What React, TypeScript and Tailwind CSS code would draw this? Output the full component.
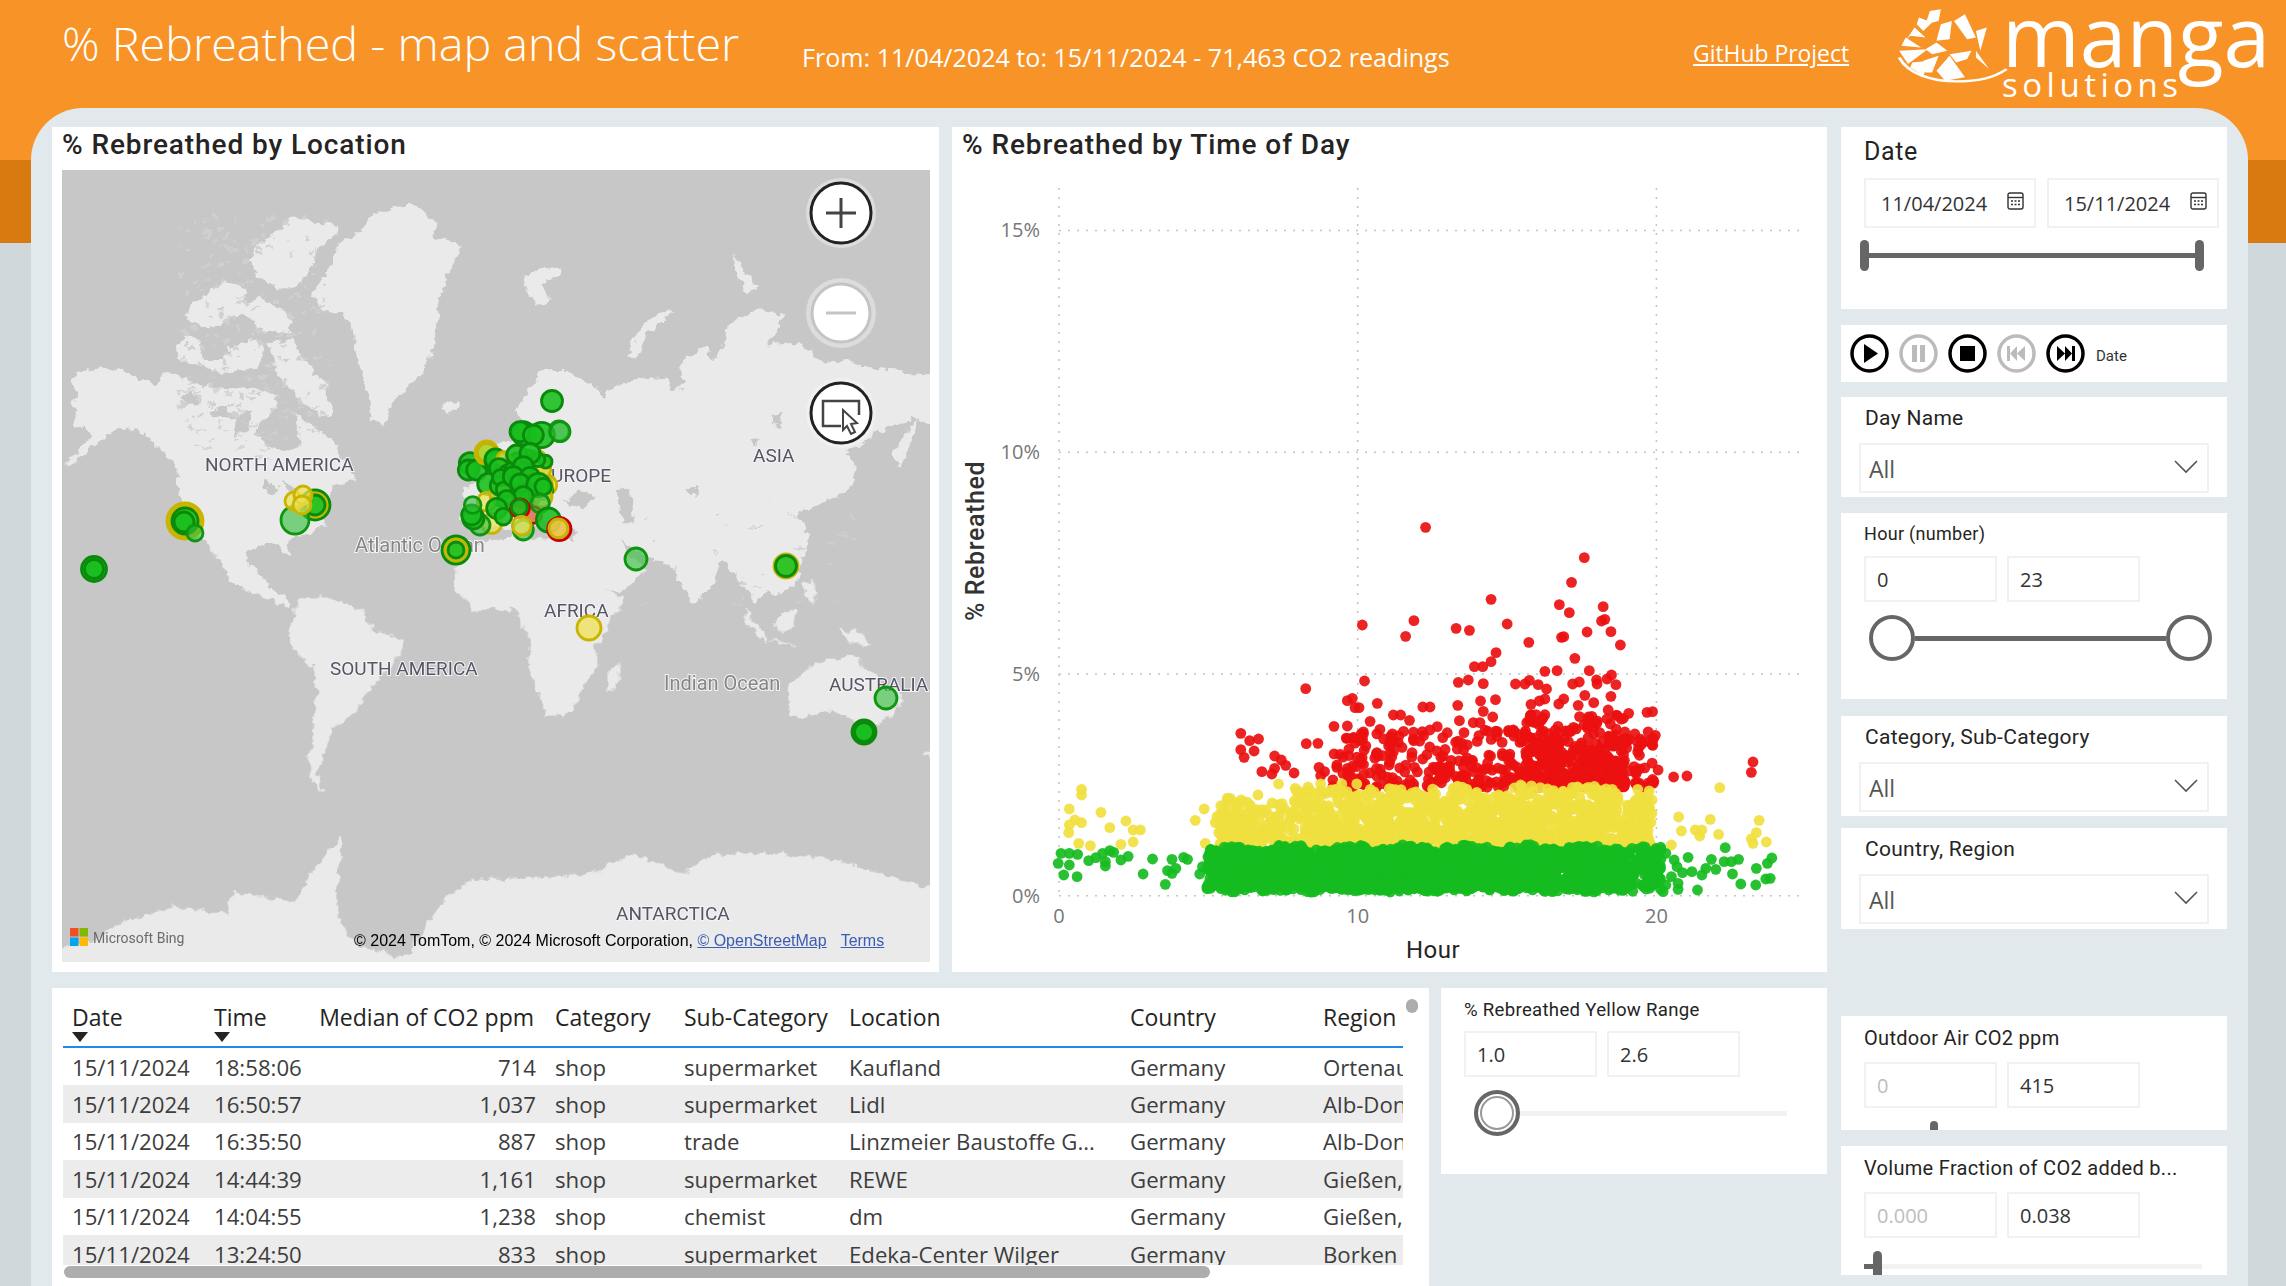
import React from "react";

// seeded random, so the scatter stays the same on every load
const makeRand = (seed: number) => () => {
  seed |= 0;
  seed = (seed + 0x6d2b79f5) | 0;
  let t = Math.imul(seed ^ (seed >>> 15), 1 | seed);
  t = (t + Math.imul(t ^ (t >>> 7), 61 | t)) ^ t;
  return ((t ^ (t >>> 14)) >>> 0) / 4294967296;
};

type Pt = [number, number];

// points read off the reference (crop coordinates), mapped in toChart
const toChart = ([x, y]: Pt): Pt => [x / 1.802 - 2, y / 3 + 330];

const redSparse: Pt[] = [
  [857, 82], [1143, 173], [1120, 247], [975, 298], [1098, 314], [1116, 338], [1177, 320], [1180, 358], [1174, 363], [743, 375],
  [836, 362], [821, 409], [912, 385], [936, 391], [1004, 372], [1148, 396], [1191, 395], [1102, 412], [1106, 410], [1043, 427],
  [1208, 435], [984, 458], [1126, 475], [975, 485], [945, 500], [960, 500], [1072, 514], [1094, 512], [1152, 512], [1192, 525],
  [1184, 537], [1165, 540], [1166, 552], [1134, 546], [1122, 552], [1200, 554], [916, 547], [934, 540], [961, 551], [1019, 552],
  [1036, 552], [1044, 541], [1060, 554], [1075, 567], [747, 543], [641, 566], [1144, 586], [1191, 589], [725, 595], [716, 602],
  [770, 610], [956, 603], [983, 599], [1047, 613], [1062, 603], [1072, 597], [1106, 597], [1097, 612], [1132, 616], [1160, 608],
  [915, 616], [852, 621], [865, 621], [730, 623], [737, 623], [961, 634], [1186, 630], [1223, 640], [1202, 646], [1256, 637],
  [1266, 635], [799, 645], [812, 645], [828, 661], [978, 651], [757, 664], [918, 662], [692, 679], [716, 678], [878, 680],
  [943, 668], [955, 668], [524, 700], [556, 717], [540, 722], [642, 731], [663, 730], [716, 715], [745, 702], [738, 722],
  [524, 749], [548, 753], [530, 772], [585, 768], [597, 780], [605, 796], [562, 815], [585, 805], [580, 822], [620, 819],
  [665, 802], [675, 815], [668, 827], [697, 802], [690, 840], [708, 820], [716, 805], [1304, 831], [1328, 828], [1276, 810],
  [1271, 706], [1447, 786], [1444, 817], [1234, 702], [1247, 724],
];

const yellowSparse: Pt[] = [
  [237, 868], [237, 885], [215, 927], [272, 937], [225, 960], [237, 968], [215, 975], [214, 998], [317, 963], [288, 983],
  [330, 990], [343, 990], [232, 1030], [253, 1037], [308, 1033], [330, 1026], [442, 961], [458, 927], [487, 941], [460, 1030],
  [478, 968], [1387, 863], [1313, 951], [1370, 958], [1458, 961], [1318, 993], [1343, 990], [1355, 990], [1351, 1008], [1385, 1003],
  [1453, 998], [1444, 1017], [1447, 1030], [1471, 1026], [1300, 1035], [1265, 900], [1265, 940], [592, 852], [622, 865], [668, 852],
  [706, 852], [733, 852], [505, 895], [525, 900], [555, 885],
];

const greenSparse: Pt[] = [
  [200, 1060], [215, 1060], [230, 1063], [195, 1090], [215, 1095], [205, 1125], [229, 1130], [250, 1082], [263, 1073], [275, 1060],
  [288, 1052], [295, 1057], [280, 1085], [280, 1098], [308, 1080], [321, 1069], [365, 1077], [348, 1122], [388, 1153], [392, 1112],
  [400, 1120], [407, 1105], [400, 1078], [421, 1072], [428, 1078], [455, 1100], [450, 1122], [1330, 1072], [1372, 1078], [1397, 1043],
  [1395, 1085], [1408, 1085], [1421, 1078], [1380, 1108], [1362, 1105], [1355, 1125], [1410, 1122], [1425, 1152], [1452, 1155], [1347, 1170],
  [1453, 1105], [1473, 1090], [1481, 1074], [1470, 1137], [1478, 1135], [1305, 1080], [1310, 1100], [1320, 1118], [1290, 1060], [1300, 1130],
  [1290, 1155], [1312, 1150], [1285, 1175], [1312, 1168], [1337, 1115],
];

const buildScatter = () => {
  const r = makeRand(42);
  const red: Pt[] = [...redSparse];
  const yellow: Pt[] = [...yellowSparse];
  const green: Pt[] = [...greenSparse];
  for (let i = 0; i < 620; i++) {
    const busy = r() < 0.38;
    const x = busy ? 1030 + r() * 190 : 690 + r() * 580;
    const y = 862 - Math.pow(r(), 1.5) * (busy ? 220 : 175);
    red.push([x, y]);
  }
  for (let i = 0; i < 1500; i++) {
    const x = 480 + r() * 785;
    if (x < 640 && r() < 0.5) continue;
    if (x > 1180 && r() < 0.3) continue;
    const top = x < 620 ? 885 + r() * 30 : 850 + Math.abs(Math.sin(x / 41)) * 14;
    yellow.push([x, top + Math.pow(r(), 0.72) * (1045 - top)]);
  }
  for (let i = 0; i < 2300; i++) {
    const x = 462 + r() * 820;
    if (x > 1215 && r() < 0.45) continue;
    if (x < 520 && r() < 0.35) continue;
    const top = 1042 + 7 * Math.sin(x / 17) + 5 * Math.sin(x / 6);
    const bottom = 1178 - 8 * Math.abs(Math.sin(x / 23));
    green.push([x, top + r() * (bottom - top)]);
  }
  return { red, yellow, green };
};

const scatter = buildScatter();

const ScatterChart = () => {
  const xAt = (h: number) => 107 + 29.87 * h;
  const yAt = (p: number) => 725.7 - 44.35 * p;
  const group = (pts: Pt[], fill: string) => (
    <g fill={fill} fillOpacity={0.92}>
      {pts.map((p, i) => {
        const [x, y] = toChart(p);
        return <circle key={i} cx={x} cy={y} r={5.4} />;
      })}
    </g>
  );
  return (
    <svg width={875} height={802} viewBox="0 0 875 802" className="block">
      <g stroke="#c4c4c4" strokeWidth={1.5} strokeDasharray="2 7">
        {[0, 5, 10, 15].map((p) => (
          <line key={p} x1={107} x2={851} y1={yAt(p)} y2={yAt(p)} />
        ))}
        {[0, 10, 20].map((h) => (
          <line key={h} x1={xAt(h)} x2={xAt(h)} y1={18} y2={726} />
        ))}
      </g>
      {group(scatter.red, "#ec1010")}
      {group(scatter.yellow, "#f0e03f")}
      {group(scatter.green, "#16bc20")}
      <g fill="#777" fontSize={20} fontFamily="'Open Sans',sans-serif">
        {[0, 5, 10, 15].map((p) => (
          <text key={p} x={88} y={yAt(p) + 7} textAnchor="end">
            {p}%
          </text>
        ))}
        {[0, 10, 20].map((h) => (
          <text key={h} x={xAt(h)} y={753} textAnchor="middle">
            {h}
          </text>
        ))}
      </g>
      <text x={481} y={788} textAnchor="middle" fontSize={24} fontWeight={400} letterSpacing={0.5} fill="#252423" fontFamily="Roboto,sans-serif">
        Hour
      </text>
      <text
        transform="translate(32 371) rotate(-90)"
        textAnchor="middle"
        fontSize={25}
        fontWeight={500}
        letterSpacing={0.6}
        fill="#333"
        fontFamily="Roboto,sans-serif"
      >
        % Rebreathed
      </text>
    </svg>
  );
};

// land shapes, one group per crop they were traced from
const landNorth = [
  "750,370 800,300 830,215 890,190 940,130 1050,100 1130,160 1110,200 1205,225 1150,320 1130,420 1120,520 1090,590 1050,640 990,690 970,765 930,750 915,650 890,580 870,470 840,430 780,420",
  "600,215 690,145 820,165 830,190 770,240 720,340 660,360 590,320 560,270",
  "365,430 400,400 450,360 500,330 550,360 540,400 600,380 690,450 680,490 600,480 540,430 450,480 380,445",
  "345,530 370,495 410,510 430,570 480,570 500,540 560,510 610,520 590,590 500,610 430,590 350,570",
  "620,520 690,510 740,590 790,640 810,730 780,740 700,680 640,600",
  "30,630 70,600 130,590 200,610 270,645 320,605 400,640 480,660 560,650 640,670 650,720 700,720 720,750 770,780 830,830 880,930 810,950 800,990 760,1000 790,1060 730,1100 680,1110 680,1160 640,1120 570,1130 550,1170 590,1210 630,1260 690,1300 680,1320 640,1290 570,1270 510,1230 470,1170 430,1110 400,1100 360,1020 350,950 340,880 290,830 240,790 180,770 130,800 90,830 30,880 5,890 60,830 90,790 60,770 30,760 50,720 25,700 50,680",
  "1140,705 1190,690 1190,715 1150,730",
];

const lakesNorth = [
  "580,790 590,750 650,720 700,720 700,770 720,820 690,840 620,830",
  "350,680 400,670 420,700 370,705",
  "430,720 500,710 520,740 450,745",
  "520,740 570,720 560,780 520,800",
  "600,930 650,950 640,975 600,950",
  "660,930 720,960 700,980 670,960",
];

const landEast = [
  "-60,1050 -40,1000 -50,960 0,930 0,870 30,830 90,810 130,760 110,720 150,650 190,600 260,600 350,650 370,680 380,660 430,640 500,620 560,630 580,670 600,650 610,630 600,590 620,560 680,530 700,570 730,540 740,470 830,410 860,420 910,440 860,520 960,520 1030,580 1100,570 1150,590 1260,600 1420,620 1420,780 1300,745 1240,770 1190,790 1100,850 1130,900 1110,960 1030,1000 950,1030 990,1100 970,1170 950,1240 890,1280 860,1260 830,1300 790,1250 730,1170 690,1260 640,1300 600,1240 570,1180 500,1165 420,1110 450,1160 500,1190 450,1250 390,1270 370,1250 295,1130 280,1100 290,1080 180,1050 130,1090",
  "445,560 480,470 560,420 570,430 500,490 470,570",
  "130,320 190,290 245,295 230,320 180,340 220,390 170,410 140,360",
  "760,250 790,300 840,350 800,370 770,320",
  "1240,850 1280,790 1310,745 1300,800 1260,900",
];

const seasEast = [
  "260,990 300,960 345,980 320,1010 270,1010",
  "410,960 450,955 460,1060 425,1060",
  "800,800 840,800 830,830",
  "880,730 905,730 900,770 880,760",
  "610,960 660,950 650,980",
];

const landSouth = [
  "710,30 740,-50 800,-70 930,-60 960,30 985,95 1015,115 965,260 965,310 945,380 910,465 875,470 860,400 840,310 845,240 835,200 820,150 745,150 725,120 710,80",
  "1010,305 1000,385 985,390 985,340",
  "430,115 490,115 550,160 560,210 620,240 610,290 560,380 530,450 490,510 470,600 460,650 475,695 455,670 445,600 455,480 460,400 455,330 420,270 410,220",
  "1310,380 1360,310 1410,290 1440,290 1450,330 1500,385 1520,420 1480,490 1450,510 1415,470 1395,450 1330,475 1315,470",
  "1550,580 1600,565 1600,600",
  "1230,150 1250,180 1275,240 1270,245 1240,200",
  "1285,180 1325,145 1320,210 1290,215",
  "1400,210 1440,215 1460,260 1430,250",
  "1275,240 1340,255 1290,250",
  "1340,60 1360,70 1360,130 1345,120",
  "-30,1180 40,1150 110,1090 200,1040 300,1060 310,1000 370,1010 420,1030 450,940 490,860 505,830 495,1000 500,1090 540,1160 620,1190 660,1090 690,1020 740,960 900,950 960,940 1030,880 1120,940 1180,880 1300,880 1400,900 1500,950 1620,1010 1620,1300 -30,1300",
];

type Kind = "g" | "l" | "y" | "r" | "o";
type Marker = [number, number, number, Kind];

const markerStyle: Record<Kind, { fill: string; stroke: string }> = {
  g: { fill: "rgba(24,190,30,.88)", stroke: "#0a8a0a" },
  l: { fill: "rgba(50,190,60,.62)", stroke: "#0f960f" },
  y: { fill: "rgba(240,226,80,.72)", stroke: "#c9b400" },
  r: { fill: "rgba(232,84,48,.72)", stroke: "#c80000" },
  o: { fill: "rgba(172,212,50,.92)", stroke: "#c2b100" },
};

const looseMarkers: Marker[] = [
  [123, 351, 18, "y"], [123, 351, 15.5, "y"], [123, 351, 13, "g"], [122, 352, 10, "g"], [133, 363, 8, "l"],
  [253, 335, 15, "g"], [253, 335, 12, "y"], [253, 335, 10, "g"], [233, 350, 14, "l"], [232, 331, 9, "y"], [241, 325, 9, "y"], [240, 335, 9, "y"],
  [394, 380, 14, "g"], [394, 380, 11, "y"], [394, 380, 8, "g"],
  [527, 458, 12, "y"], [497, 261, 10, "l"], [574, 389, 11, "l"], [724, 396, 12, "y"], [724, 396, 10.5, "g"],
  [824, 528, 11, "l"], [802, 562, 12, "g"], [802, 562, 9.5, "g"], [32, 399, 12.5, "g"], [32, 399, 9.5, "g"], [490, 231, 10.5, "g"],
];

const clusterBase: Marker[] = [
  [310, 160, 35, "g"], [300, 155, 30, "g"], [365, 165, 38, "g"], [340, 165, 30, "g"], [420, 155, 30, "l"],
  [150, 250, 32, "g"], [145, 270, 30, "g"], [170, 270, 30, "g"], [215, 245, 28, "g"], [240, 270, 28, "g"], [205, 312, 32, "g"], [240, 310, 26, "g"],
  [200, 218, 35, "y"], [200, 218, 28, "o"],
  [360, 260, 30, "y"], [365, 265, 22, "y"], [200, 365, 28, "y"], [215, 430, 30, "y"], [380, 315, 30, "y"],
  [290, 225, 30, "g"], [330, 220, 30, "g"], [310, 260, 30, "g"], [280, 290, 30, "g"], [330, 290, 28, "g"], [300, 310, 28, "g"],
  [355, 315, 35, "g"], [370, 320, 25, "g"], [310, 350, 30, "g"],
  [340, 405, 25, "r"], [360, 370, 28, "l"], [260, 360, 28, "g"], [230, 385, 30, "g"], [250, 410, 25, "g"],
  [300, 385, 28, "r"], [298, 382, 24, "g"], [180, 435, 30, "l"], [160, 415, 32, "g"], [155, 405, 30, "g"], [158, 375, 25, "l"],
  [310, 450, 30, "l"], [305, 437, 28, "y"], [385, 420, 36, "g"], [418, 447, 35, "r"], [415, 445, 28, "y"],
];

const buildCluster = (): Marker[] => {
  const r = makeRand(7);
  const extra: Marker[] = [];
  for (let i = 0; i < 70; i++) {
    extra.push([225 + r() * 155, 235 + r() * 120, 18 + r() * 14, r() < 0.38 ? "y" : "g"]);
  }
  const out = [...clusterBase.slice(0, 19), ...extra, ...clusterBase.slice(19)];
  return out.map(([x, y, rad, k]) => [358 + x / 3, 210 + y / 3, rad / 3, k]);
};

const markers = [...looseMarkers, ...buildCluster()];

const landSpecks = (() => {
  const r = makeRand(11);
  const out: { x: number; y: number; w: number; h: number }[] = [];
  for (let i = 0; i < 70; i++) {
    out.push({ x: 115 + r() * 140, y: 215 + r() * 75, w: 2 + r() * 7, h: 1.5 });
  }
  for (let i = 0; i < 30; i++) {
    out.push({ x: 560 + r() * 230, y: 330 + r() * 110, w: 2 + r() * 8, h: 1.5 });
  }
  // the arctic islands are broken up in the reference
  for (let i = 0; i < 170; i++) {
    out.push({ x: 115 + r() * 150, y: 45 + r() * 200, w: 1.5 + r() * 6, h: 1.5 + r() * 3.5 });
  }
  return out;
})();

const labels: { x: number; y: number; t: string; sea?: boolean; end?: boolean }[] = [
  { x: 143, y: 301, t: "NORTH AMERICA" },
  { x: 691, y: 292, t: "ASIA" },
  { x: 549, y: 312, t: "EUROPE", end: true },
  { x: 293, y: 382, t: "Atlantic Ocean", sea: true },
  { x: 482, y: 447, t: "AFRICA" },
  { x: 268, y: 505, t: "SOUTH AMERICA" },
  { x: 602, y: 520, t: "Indian Ocean", sea: true },
  { x: 767, y: 521, t: "AUSTRALIA" },
  { x: 554, y: 750, t: "ANTARCTICA" },
];

const WorldMap = () => (
  <div className="relative ml-[10px] h-[792px] w-[868px] overflow-hidden bg-[#c7c7c7]">
    <svg width={868} height={792} viewBox="0 0 868 792" className="block">
      <defs>
        <filter id="rough" filterUnits="userSpaceOnUse" x={-30} y={-30} width={928} height={852}>
          <feTurbulence type="fractalNoise" baseFrequency="0.11" numOctaves={3} seed={4} result="noise" />
          <feDisplacementMap in="SourceGraphic" in2="noise" scale={11} xChannelSelector="R" yChannelSelector="G" />
        </filter>
      </defs>
      <g filter="url(#rough)">
        <g fill="#eaeaea" transform="scale(.3333)">
          {landNorth.map((p) => (
            <polygon key={p} points={p} />
          ))}
        </g>
        <g fill="#c7c7c7" transform="scale(.3333)">
          {lakesNorth.map((p) => (
            <polygon key={p} points={p} />
          ))}
        </g>
        <g fill="#eaeaea" transform="translate(418 0) scale(.3333)">
          {landEast.map((p) => (
            <polygon key={p} points={p} />
          ))}
        </g>
        <g fill="#c7c7c7" transform="translate(418 0) scale(.3333)">
          {seasEast.map((p) => (
            <polygon key={p} points={p} />
          ))}
        </g>
        <g fill="#eaeaea" transform="translate(0 390) scale(.5537 .3333)">
          {landSouth.map((p) => (
            <polygon key={p} points={p} />
          ))}
        </g>
        <g fill="#d0d0d0">
          {landSpecks.map((s, i) => (
            <rect key={i} x={s.x} y={s.y} width={s.w} height={s.h} />
          ))}
        </g>
      </g>
      <g fontFamily="Roboto,sans-serif" stroke="#f4f4f4" strokeWidth={2} style={{ paintOrder: "stroke" }}>
        {labels.map((l) => (
          <text
            key={l.t}
            x={l.x}
            y={l.y}
            fontSize={l.sea ? 20 : 19}
            fill={l.sea ? "#858585" : "#555566"}
            textAnchor={l.end ? "end" : "start"}
          >
            {l.t}
          </text>
        ))}
      </g>
      <g strokeWidth={2.8}>
        {markers.map(([x, y, r, k], i) => (
          <circle key={i} cx={x} cy={y} r={r} fill={markerStyle[k].fill} stroke={markerStyle[k].stroke} />
        ))}
      </g>

      <circle cx={779} cy={43} r={35} fill="#dcdcdc" />
      <circle cx={779} cy={43} r={30} fill="#fff" stroke="#222" strokeWidth={3} />
      <path d="M779 28v30M764 43h30" stroke="#444" strokeWidth={3} />
      <circle cx={779} cy={143} r={35} fill="#dcdcdc" />
      <circle cx={779} cy={143} r={29} fill="#fff" stroke="#c4c4c4" strokeWidth={3} />
      <path d="M764 143h30" stroke="#c4c4c4" strokeWidth={3} />
      <circle cx={779} cy={243} r={35} fill="#f0f0f0" />
      <circle cx={779} cy={243} r={30} fill="#fff" stroke="#222" strokeWidth={3} />
      <path d="M779 256h-18v-25h36v14" fill="none" stroke="#444" strokeWidth={2.5} />
      <path d="M781 240l14 13-6 1 4 8-4 2-4-8-4 4z" fill="#fff" stroke="#444" strokeWidth={2} />
    </svg>

    <div className="absolute left-[8px] top-[758px] flex items-center gap-[5px]">
      <svg width={18} height={18} viewBox="0 0 18 18">
        <rect width={8.5} height={8.5} fill="#f25022" />
        <rect x={9.5} width={8.5} height={8.5} fill="#7fba00" />
        <rect y={9.5} width={8.5} height={8.5} fill="#00a4ef" />
        <rect x={9.5} y={9.5} width={8.5} height={8.5} fill="#ffb900" />
      </svg>
      <span className="mt-[1px] font-['Roboto',sans-serif] text-[14px] leading-none text-[#6b6b6b]">Microsoft Bing</span>
    </div>
    <div className="absolute left-[292px] top-[762px] whitespace-nowrap font-['Liberation_Sans',sans-serif] text-[16px] leading-[18px] text-black">
      © 2024 TomTom, © 2024 Microsoft Corporation, <span className="text-[#3c5cb4] underline">© OpenStreetMap</span>
      <span className="ml-[14px] text-[#3c5cb4] underline">Terms</span>
    </div>
  </div>
);

const CardTitle = ({ children }: { children: React.ReactNode }) => (
  <h2 className="h-[43px] pl-[10px] font-['Roboto',sans-serif] text-[28px] font-medium leading-[36px] tracking-[0.9px] text-[#252423]">
    {children}
  </h2>
);

type RowData = [string, string, string, string, string, string, string, string];

const rows: RowData[] = [
  ["15/11/2024", "18:58:06", "714", "shop", "supermarket", "Kaufland", "Germany", "Ortenaukreis"],
  ["15/11/2024", "16:50:57", "1,037", "shop", "supermarket", "Lidl", "Germany", "Alb-Donau-Kreis"],
  ["15/11/2024", "16:35:50", "887", "shop", "trade", "Linzmeier Baustoffe G...", "Germany", "Alb-Donau-Kreis"],
  ["15/11/2024", "14:44:39", "1,161", "shop", "supermarket", "REWE", "Germany", "Gießen, Kreis"],
  ["15/11/2024", "14:04:55", "1,238", "shop", "chemist", "dm", "Germany", "Gießen, Kreis"],
  ["15/11/2024", "13:24:50", "833", "shop", "supermarket", "Edeka-Center Wilger", "Germany", "Borken"],
];

const tableCols = "grid grid-cols-[141px_107px_234px_129px_165px_283px_192px_89px]";

const cellPad = ["pl-[9px]", "pl-[10px]", "pr-[9px] text-right", "pl-[10px]", "pl-[10px]", "pl-[10px]", "pl-[8px]", "pl-[9px]"];

const SortMark = () => <span className="block h-0 w-0 border-x-[8px] border-t-[10px] border-x-transparent border-t-[#252423]" />;

const DataTable = () => (
  <div className="relative h-[298px] w-[1377px] bg-white pl-[11px]">
    <div className={`${tableCols} h-[60px] w-[1340px] border-b-2 border-[#2088e8] text-[23px] leading-[30px] text-[#252423]`}>
      <div className="pl-[9px] pt-[14px]">
        Date
        <SortMark />
      </div>
      <div className="pl-[10px] pt-[14px]">
        Time
        <SortMark />
      </div>
      <div className="whitespace-nowrap pr-[11px] pt-[14px] text-right">Median of CO2 ppm</div>
      <div className="pl-[10px] pt-[14px]">Category</div>
      <div className="pl-[10px] pt-[14px]">Sub-Category</div>
      <div className="pl-[10px] pt-[14px]">Location</div>
      <div className="pl-[8px] pt-[14px]">Country</div>
      <div className="pl-[9px] pt-[14px]">Region</div>
    </div>
    <div className="h-[217px] w-[1340px] overflow-hidden">
      {rows.map((row, i) => (
        <div
          key={row[1]}
          className={`${tableCols} h-[37.4px] items-center pt-[2px] text-[22.2px] leading-[30px] text-[#3d3d3d] ${i % 2 === 1 ? "bg-[#ececec]" : "bg-white"}`}
        >
          {row.map((cell, c) => (
            <div key={c} className={`overflow-hidden whitespace-nowrap ${cellPad[c]}`}>
              {cell}
            </div>
          ))}
        </div>
      ))}
    </div>
    {/* scrollbars sit over the table */}
    <div className="absolute left-[12px] top-[278px] h-[12px] w-[1146px] rounded-full bg-[#adadad]" />
    <div className="absolute left-[1354px] top-[11px] h-[14px] w-[12px] rounded-full bg-[#adadad]" />
  </div>
);

const ValueBox = ({ value, muted }: { value: string; muted?: boolean }) => (
  <div
    className={`flex h-[46px] w-[133px] items-center border-2 border-[#f1f1f1] pl-[11px] pt-[2px] text-[20px] ${muted ? "text-[#bdbdbd]" : "text-[#333]"}`}
  >
    {value}
  </div>
);

const SliceLabel = ({ children, size }: { children: React.ReactNode; size: string }) => (
  <div className={`font-['Roboto',sans-serif] leading-[26px] tracking-[0.3px] text-[#252423] ${size}`}>{children}</div>
);

const Dropdown = () => (
  <div className="mt-[12px] flex h-[50px] w-[350px] items-center justify-between border-2 border-[#f1f1f1] pl-[8px] pr-[9px] pt-[2px] text-[23px] text-[#555]">
    All
    <svg width={24} height={14} viewBox="0 0 24 14" fill="none" stroke="#555" strokeWidth={1.6} className="mb-[4px]">
      <path d="M1 1l11 11L23 1" />
    </svg>
  </div>
);

const DateBox = ({ value }: { value: string }) => (
  <div className="flex h-[50px] w-[172px] items-center justify-between border-2 border-[#f1f1f1] pl-[15px] pr-[10px] pt-[2px] text-[20px] text-[#333]">
    {value}
    <svg width={17} height={18} viewBox="0 0 17 18" fill="none" className="mb-[6px]">
      <rect x={1} y={1} width={15} height={16} rx={2} stroke="#333" strokeWidth={1.4} />
      <path d="M1 5.5h15" stroke="#333" strokeWidth={1.4} />
      <path d="M4 9h2M7.5 9h2M11 9h2M4 12.5h2M7.5 12.5h2M11 12.5h2" stroke="#333" strokeWidth={1.4} />
    </svg>
  </div>
);

const RoundHandle = ({ double }: { double?: boolean }) => (
  <span
    className={`block h-[46px] w-[46px] shrink-0 rounded-full border-[4px] border-[#666] bg-white ${double ? "shadow-[inset_0_0_0_2px_#fff,inset_0_0_0_4px_#999]" : ""}`}
  />
);

const PlayButton = ({ off, children }: { off?: boolean; children: React.ReactNode }) => (
  <svg width={39} height={39} viewBox="0 0 39 39" className="shrink-0">
    <circle cx={19.5} cy={19.5} r={17.5} fill="#fff" stroke={off ? "#bbb" : "#000"} strokeWidth={3.5} />
    <g fill={off ? "#bbb" : "#000"}>{children}</g>
  </svg>
);

const Playback = () => (
  <div className="flex h-[57px] items-center gap-[10px] bg-white pl-[9px]">
    <PlayButton>
      <path d="M14 10l14 9.5L14 29z" />
    </PlayButton>
    <PlayButton off>
      <path d="M13 11h5v17h-5zM21 11h5v17h-5z" />
    </PlayButton>
    <PlayButton>
      <path d="M12 12h15v15H12z" />
    </PlayButton>
    <PlayButton off>
      <path d="M10 12h3v15h-3zM20 12v15l-7-7.5zM28 12v15l-8-7.5z" />
    </PlayButton>
    <PlayButton>
      <path d="M29 12h-3v15h3zM19 12v15l7-7.5zM11 12v15l8-7.5z" />
    </PlayButton>
    <span className="ml-[1px] mt-[5px] font-['Roboto',sans-serif] text-[15px] text-[#333]">Date</span>
  </div>
);

const SidePanel = () => (
  <div className="flex w-[386px] shrink-0 flex-col">
    <div className="h-[182px] bg-white pl-[23px] pt-[11px]">
      <div className="font-['Roboto',sans-serif] text-[25px] font-normal leading-[28px] tracking-[0.6px] text-[#252423]">Date</div>
      <div className="mt-[12px] flex gap-[11px]">
        <DateBox value="11/04/2024" />
        <DateBox value="15/11/2024" />
      </div>
      <div className="-ml-[4px] mt-[12px] flex h-[31px] w-[344px] items-center">
        <span className="h-[31px] w-[9px] rounded-full bg-[#666]" />
        <span className="h-[5px] flex-1 bg-[#666]" />
        <span className="h-[31px] w-[9px] rounded-full bg-[#666]" />
      </div>
    </div>

    <div className="mt-[16px]">
      <Playback />
    </div>

    <div className="mt-[15px] h-[100px] bg-white pl-[18px] pt-[8px]">
      <div className="pl-[6px]">
        <SliceLabel size="text-[21px]">Day Name</SliceLabel>
      </div>
      <Dropdown />
    </div>

    <div className="mt-[16px] h-[186px] bg-white pl-[23px] pt-[8px]">
      <SliceLabel size="text-[18px]">Hour (number)</SliceLabel>
      <div className="mt-[9px] flex gap-[10px]">
        <ValueBox value="0" />
        <ValueBox value="23" />
      </div>
      <div className="ml-[5px] mt-[13px] flex w-[343px] items-center">
        <RoundHandle />
        <span className="h-[5px] flex-1 bg-[#666]" />
        <RoundHandle />
      </div>
    </div>

    <div className="mt-[17px] h-[100px] bg-white pl-[18px] pt-[8px]">
      <div className="pl-[6px]">
        <SliceLabel size="text-[21px]">Category, Sub-Category</SliceLabel>
      </div>
      <Dropdown />
    </div>

    <div className="mt-[12px] h-[101px] bg-white pl-[18px] pt-[8px]">
      <div className="pl-[6px]">
        <SliceLabel size="text-[21px]">Country, Region</SliceLabel>
      </div>
      <Dropdown />
    </div>

    <div className="mt-[87px] h-[114px] overflow-hidden bg-white pl-[23px] pt-[9px]">
      <SliceLabel size="text-[20px]">Outdoor Air CO2 ppm</SliceLabel>
      <div className="mt-[11px] flex gap-[10px]">
        <ValueBox value="0" muted />
        <ValueBox value="415" />
      </div>
      <span className="ml-[66px] mt-[13px] block h-[31px] w-[8px] rounded-full bg-[#666]" />
    </div>

    <div className="mt-[16px] h-[129px] overflow-hidden bg-white pl-[23px] pt-[9px]">
      <SliceLabel size="text-[20px]">Volume Fraction of CO2 added b...</SliceLabel>
      <div className="mt-[11px] flex gap-[10px]">
        <ValueBox value="0.000" muted />
        <ValueBox value="0.038" />
      </div>
      <div className="mt-[13px] flex h-[31px] w-[338px] items-center">
        <span className="h-[5px] w-[9px] bg-[#666]" />
        <span className="h-[31px] w-[9px] rounded-full bg-[#666]" />
        <span className="h-[5px] flex-1 bg-[#f2f2f2]" />
      </div>
    </div>
  </div>
);

const MangaLogo = () => (
  <div className="ml-auto flex h-[108px] shrink-0 items-start pr-[19px]">
    <svg width={114} height={78} viewBox="680 15 260 235" preserveAspectRatio="none" className="mt-[6px]" fill="#fff">
      <polygon points="755,30 780,25 775,60 745,70" />
      <polygon points="730,50 760,65 740,90 725,70" />
      <polygon points="810,60 835,40 860,110 840,115" />
      <polygon points="780,70 805,60 800,115 770,120" />
      <polygon points="860,90 885,80 870,150" />
      <polygon points="720,80 745,110 710,105 700,120" />
      <polygon points="700,110 735,140 690,135" />
      <polygon points="685,150 750,145 705,190" />
      <polygon points="770,125 795,150 760,160 745,145" />
      <polygon points="800,160 850,150 840,175 815,185" />
      <polygon points="740,180 775,165 760,215 745,215" />
      <polygon points="715,185 755,180 740,225 710,200" />
      <polygon points="860,150 890,205 860,170" />
      <polygon points="770,210 800,165 835,230 790,240" />
      <path d="M685 170c20 50 75 72 130 72 50 0 85-10 115-37" fill="none" stroke="#fff" strokeWidth={7} />
    </svg>
    <div className="-ml-[9px] flex h-[108px] w-[265px] flex-col">
      <span className="h-[70px] whitespace-nowrap text-[84px] font-normal leading-[70px] text-white">manga</span>
      <span className="whitespace-nowrap text-[33px] font-normal leading-[30px] tracking-[4.5px] text-white">solutions</span>
    </div>
  </div>
);

const App = () => {
  return (
    <div className="h-[1286px] w-[2286px] overflow-hidden bg-[linear-gradient(#f89328_0,#f89328_160px,#d87a10_160px,#d87a10_243px,#d0d8db_243px)] font-['Open_Sans',sans-serif]">
      <header className="flex h-[108px] items-start text-white">
        <h1 className="ml-[62px] mt-[12px] w-[678px] shrink-0 whitespace-nowrap text-[46.7px] font-light leading-[62px]">% Rebreathed - map and scatter</h1>
        <p className="ml-[62px] mt-[40px] w-[649px] shrink-0 whitespace-nowrap text-[25.1px] font-normal leading-[34px]">
          From: 11/04/2024 to: 15/11/2024 - 71,463 CO2 readings
        </p>
        <a className="ml-[242px] mt-[38px] shrink-0 whitespace-nowrap text-[22.9px] font-normal leading-[32px] underline">GitHub Project</a>
        <MangaLogo />
      </header>

      <main className="ml-[31px] flex h-[1178px] w-[2217px] gap-[14px] rounded-t-[52px] bg-[#e1e9ec] pl-[21px] pt-[19px]">
        <div className="flex w-[1775px] flex-col gap-[16px]">
          <div className="flex h-[845px] gap-[13px]">
            <section className="w-[887px] bg-white">
              <CardTitle>% Rebreathed by Location</CardTitle>
              <WorldMap />
            </section>
            <section className="w-[875px] bg-white">
              <CardTitle>% Rebreathed by Time of Day</CardTitle>
              <ScatterChart />
            </section>
          </div>
          <div className="flex items-start gap-[12px]">
            <DataTable />
            <section className="h-[186px] w-[386px] bg-white pl-[23px] pt-[9px]">
              <SliceLabel size="text-[18.6px]">% Rebreathed Yellow Range</SliceLabel>
              <div className="mt-[8px] flex gap-[10px]">
                <ValueBox value="1.0" />
                <ValueBox value="2.6" />
              </div>
              <div className="ml-[10px] mt-[13px] flex w-[313px] items-center">
                <RoundHandle double />
                <span className="h-[5px] flex-1 bg-[#f2f2f2]" />
              </div>
            </section>
          </div>
        </div>
        <SidePanel />
      </main>
    </div>
  );
};

export default App;
